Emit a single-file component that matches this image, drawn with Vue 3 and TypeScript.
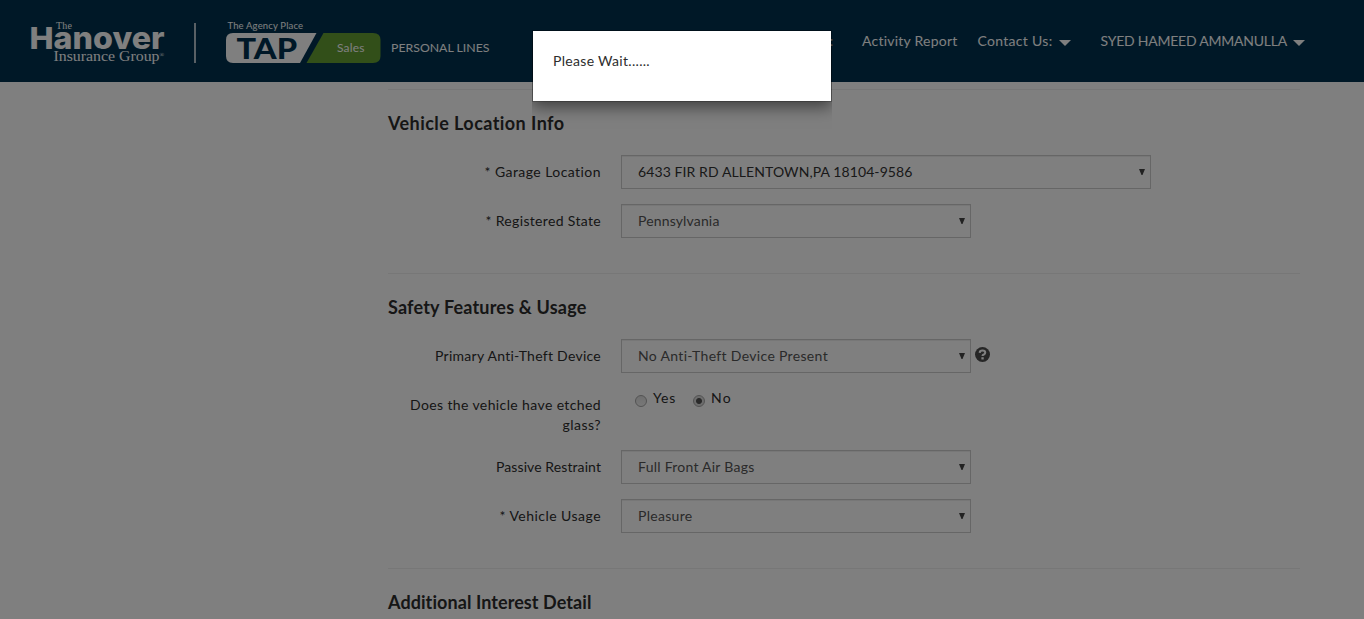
<script setup lang="ts">
import type { Directive } from 'vue'

interface Choice { text: string; width: number; checked?: boolean }
interface Line { text: string; width: number }
interface Row {
  label: Line[]
  value?: Line
  wide?: boolean
  dark?: boolean
  help?: boolean
  choices?: Choice[]
}
interface Section { title: Line; rows: Row[] }

// Tracks the text out (or in) so that it fills the given width.
const vFit: Directive<HTMLElement, number> = {
  mounted(el, binding) {
    const natural = el.getBoundingClientRect().width
    const count = (el.textContent ?? '').length
    const spacing = (binding.value - natural) / count
    el.style.letterSpacing = `${spacing.toFixed(3)}px`
  },
}

const sections: Section[] = [
  {
    title: { text: 'Vehicle Location Info', width: 176.5 },
    rows: [
      {
        label: [{ text: '* Garage Location', width: 116.5 }],
        value: { text: '6433 FIR RD ALLENTOWN,PA 18104-9586', width: 274.5 },
        wide: true,
        dark: true,
      },
      {
        label: [{ text: '* Registered State', width: 115.5 }],
        value: { text: 'Pennsylvania', width: 81.5 },
      },
    ],
  },
  {
    title: { text: 'Safety Features & Usage', width: 198.5 },
    rows: [
      {
        label: [{ text: 'Primary Anti-Theft Device', width: 166 }],
        value: { text: 'No Anti-Theft Device Present', width: 190 },
        help: true,
      },
      {
        label: [
          { text: 'Does the vehicle have etched', width: 191 },
          { text: 'glass?', width: 38.5 },
        ],
        choices: [
          { text: 'Yes', width: 23 },
          { text: 'No', width: 21, checked: true },
        ],
      },
      {
        label: [{ text: 'Passive Restraint', width: 105 }],
        value: { text: 'Full Front Air Bags', width: 116.5 },
      },
      {
        label: [{ text: '* Vehicle Usage', width: 101.5 }],
        value: { text: 'Pleasure', width: 54.5 },
      },
    ],
  },
  { title: { text: 'Additional Interest Detail', width: 203.5 }, rows: [] },
]
</script>

<template>
  <div class="page">
    <header class="header">
      <svg class="brand" width="500" height="82" viewBox="0 0 500 82">
        <text class="serif" x="56" y="29" font-size="10" textLength="16">The</text>
        <text class="hanover" x="29.5" y="49" font-size="30.500" textLength="135" lengthAdjust="spacingAndGlyphs">Hanover</text>
        <text class="serif" x="53.500" y="60.500" font-size="15" textLength="106" lengthAdjust="spacingAndGlyphs">Insurance Group</text>
        <text class="serif" x="159.500" y="57" font-size="6">®</text>
        <rect x="194.300" y="23" width="1.400" height="40" fill="#fff" />
        <text class="sans" x="227.500" y="29" font-size="9.500" textLength="75.500">The Agency Place</text>
        <path d="M233 33H316.500L300 63H233Q226 63 226 56V40Q226 33 233 33Z" fill="#fff" />
        <path d="M323.500 33H373Q380.500 33 380.500 40V56Q380.500 63 373 63H306.500Z" fill="#649e33" />
        <text class="tap" x="236.500" y="59" font-size="29" textLength="60.500" lengthAdjust="spacingAndGlyphs">TAP</text>
        <text class="sans" x="337" y="52" font-size="12" textLength="27.500">Sales</text>
        <text class="sans" x="391" y="52" font-size="11.800" textLength="98.500" lengthAdjust="spacingAndGlyphs">PERSONAL LINES</text>
      </svg>
      <nav class="nav">
        <span class="item colon">:</span>
        <span class="item report"><span v-fit="95.5">Activity Report</span></span>
        <span class="item contact">
          <span v-fit="75">Contact Us:</span>
          <svg class="caret" width="12" height="6" viewBox="0 0 12 6"><path d="M0 0H12L6 6Z" fill="#fff" /></svg>
        </span>
        <span class="item user">
          <span v-fit="186.5">SYED HAMEED AMMANULLA</span>
          <svg class="caret" width="12" height="6" viewBox="0 0 12 6"><path d="M0 0H12L6 6Z" fill="#fff" /></svg>
        </span>
      </nav>
    </header>

    <main class="content">
      <section v-for="section in sections" :key="section.title.text" class="section">
        <h2 class="title"><span v-fit="section.title.width">{{ section.title.text }}</span></h2>
        <div v-for="row in section.rows" :key="row.label[0].text" class="row">
          <div class="label">
            <div v-for="line in row.label" :key="line.text"><span v-fit="line.width">{{ line.text }}</span></div>
          </div>
          <div v-if="row.value" class="select" :class="{ wide: row.wide, dark: row.dark }">
            <span v-fit="row.value.width">{{ row.value.text }}</span>
            <svg class="arrow" width="6" height="7" viewBox="0 0 6 7"><path d="M0 0H6L3.500 6H2.500Z" fill="#444" /></svg>
          </div>
          <svg v-if="row.help" class="help" width="15" height="15" viewBox="0 0 16 16">
            <circle cx="8" cy="8" r="8" fill="#4c4c4c" />
            <path d="M5 6.300Q5.100 3.800 8 3.800T10.900 6Q10.900 7.200 9.400 8Q8 8.700 8 9.700" fill="none" stroke="#fff" stroke-width="2.200" />
            <rect x="6.800" y="10.900" width="2.500" height="2.400" fill="#fff" />
          </svg>
          <div v-if="row.choices" class="choices">
            <div v-for="choice in row.choices" :key="choice.text" class="choice">
              <span class="radio" :class="{ checked: choice.checked }"></span>
              <span v-fit="choice.width">{{ choice.text }}</span>
            </div>
          </div>
        </div>
      </section>
    </main>

    <div class="backdrop">
      <div class="dialog"><span v-fit="97">Please Wait......</span></div>
    </div>
  </div>
</template>

<style>
html,
body {
  overflow: hidden;
}
</style>

<style scoped>
.page {
  position: relative;
  height: 619px;
  overflow: hidden;
  background: #fff;
  color: #2d2d2d;
  font: 14px/20px Lato, "Open Sans", sans-serif;
  font-kerning: normal;
  font-variant-ligatures: none;
}
.page span {
  white-space: nowrap;
}
.header {
  display: flex;
  justify-content: space-between;
  height: 82px;
  background: #00314f;
  color: #fff;
}
.brand {
  flex: none;
  fill: #fff;
}
.serif {
  font-family: "Liberation Serif", serif;
}
.sans {
  font-family: Lato, sans-serif;
}
.hanover {
  font-family: Inter, sans-serif;
  font-weight: 800;
}
.tap {
  font-family: Lato, sans-serif;
  font-weight: 900;
  fill: #00314f;
}
.nav {
  display: flex;
  padding: 31px 59px 0 0;
}
.item {
  display: flex;
  height: 20px;
}
.colon {
  margin-right: 29px;
}
.report {
  margin-right: 20px;
}
.contact {
  margin-right: 30px;
}
.caret {
  margin: 9px 0 0 6px;
}
.content {
  width: 912px;
  margin: 7px 0 0 388px;
}
.section {
  padding-bottom: 20px;
  border-top: 1px solid #eee;
}
.title {
  height: 65px;
  margin: 0;
  padding-top: 21px;
  box-sizing: border-box;
  font-size: 18px;
  line-height: 24px;
  font-weight: 700;
}
.row {
  display: flex;
  margin-bottom: 15px;
}
.label {
  width: 213px;
  padding-top: 7px;
  margin-right: 20px;
  text-align: right;
}
.select {
  display: flex;
  justify-content: space-between;
  box-sizing: border-box;
  width: 350px;
  height: 34px;
  padding: 6px 5px 0 16px;
  border: 1px solid #ccc;
  box-shadow: inset 0 1px 1px rgba(0, 0, 0, 0.075);
  color: #555;
}
.wide {
  width: 530px;
}
.dark {
  color: #333;
}
.arrow {
  margin-top: 7px;
}
.help {
  margin: 8px 0 0 4px;
}
.choices {
  display: flex;
  gap: 17px;
  padding-left: 14px;
}
.choice {
  display: flex;
}
.radio {
  box-sizing: border-box;
  width: 12px;
  height: 12px;
  margin: 7px 6px 0 0;
  border: 1px solid #a6a6a6;
  border-radius: 50%;
  background: linear-gradient(#dedede, #f0f0f0);
}
.checked {
  background: radial-gradient(circle, #555 0 2.500px, #dadada 3.500px);
}
.backdrop {
  position: absolute;
  inset: 0;
  background: rgba(0, 0, 0, 0.5);
}
.dialog {
  box-sizing: border-box;
  width: 300px;
  height: 72px;
  margin: 30px 0 0 532px;
  padding: 20px 20px 0;
  border: 1px solid rgba(0, 0, 0, 0.2);
  background: #fff;
  background-clip: padding-box;
  box-shadow: 0 5px 15px rgba(0, 0, 0, 0.5);
  clip-path: inset(0 0 -30px 0);
}
</style>
